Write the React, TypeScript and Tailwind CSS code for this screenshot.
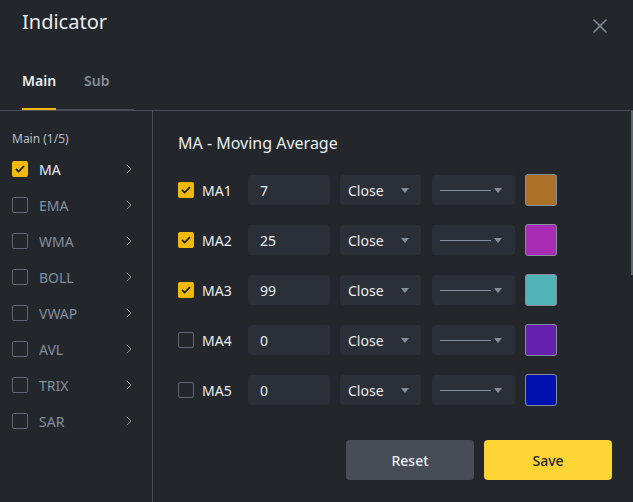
import { ChevronRight, X } from "lucide-react";

const sideItems = [
  { name: "MA", checked: true },
  { name: "EMA", checked: false },
  { name: "WMA", checked: false },
  { name: "BOLL", checked: false },
  { name: "VWAP", checked: false },
  { name: "AVL", checked: false },
  { name: "TRIX", checked: false },
  { name: "SAR", checked: false },
];

const maRows = [
  { name: "MA1", value: "7", checked: true, color: "bg-[#ad7029]" },
  { name: "MA2", value: "25", checked: true, color: "bg-[#a72bb3]" },
  { name: "MA3", value: "99", checked: true, color: "bg-[#52b3b6]" },
  { name: "MA4", value: "0", checked: false, color: "bg-[#6421ad]" },
  { name: "MA5", value: "0", checked: false, color: "bg-[#0012ad]" },
];

const Checkbox = ({ checked }: { checked: boolean }) =>
  checked ? (
    <div className="w-4 h-4 rounded-[2px] bg-[#f0b90b] flex items-center justify-center shrink-0">
      <svg width="10" height="8" viewBox="0 0 10 8" fill="none">
        <path d="M1 4l2.6 2.6L9 1.2" stroke="#1e2329" strokeWidth="1.8" />
      </svg>
    </div>
  ) : (
    <div className="w-4 h-4 rounded-[2px] border border-[#5e6673] shrink-0" />
  );

const Caret = () => (
  <svg width="8" height="5" viewBox="0 0 8 5">
    <path d="M0 0h8L4 5z" fill="#848e9c" />
  </svg>
);

export default function App() {
  return (
    <div
      className="relative w-[633px] h-[502px] bg-[#23272c] text-[#eaecef] overflow-hidden flex flex-col"
      style={{ fontFamily: '"Noto Sans", "Liberation Sans", sans-serif' }}
    >
      <div className="h-[44px] px-[22px] flex items-center justify-between">
        <h1 className="text-[20px] leading-[28px]">Indicator</h1>
        <X className="w-[24px] h-[24px] text-[#848e9c] -mr-px mt-[8px]" strokeWidth={1.6} />
      </div>

      <div className="px-[22px] pt-[27px] border-b border-[#474d57]">
        <div className="w-[112px] flex gap-[28px] border-b border-[#474d57]">
          <div className="text-[14px] leading-[20px] font-semibold pb-[17px] border-b-2 border-[#f0b90b] -mb-px">
            Main
          </div>
          <div className="text-[14px] leading-[20px] font-semibold text-[#848e9c] pb-[17px]">Sub</div>
        </div>
      </div>

      <div className="flex flex-1">
        <div className="w-[153px] border-r border-[#474d57] pt-[20px] px-[12px]">
          <div className="text-[12px] leading-[16px] text-[#b7bdc6] mb-[4px]">Main (1/5)</div>
          {sideItems.map((item) => (
            <div key={item.name} className="h-[36px] flex items-center">
              <Checkbox checked={item.checked} />
              <span
                className={`ml-[11px] flex-1 text-[14px] ${item.checked ? "text-[#eaecef]" : "text-[#848e9c]"}`}
              >
                {item.name}
              </span>
              <ChevronRight className="w-4 h-4 text-[#848e9c] mr-[3px]" strokeWidth={1.5} />
            </div>
          ))}
        </div>

        <div className="flex-1 pl-[25px] pt-[20px] pr-[21px] flex flex-col">
          <h2 className="text-[16px] leading-[24px]">MA - Moving Average</h2>
          <div className="mt-[20px] flex flex-col gap-[20px]">
            {maRows.map((row) => (
              <div key={row.name} className="flex items-center h-[30px]">
                <Checkbox checked={row.checked} />
                <span className="ml-[8px] w-[46px] text-[14px]">{row.name}</span>
                <div className="w-[82px] h-[30px] rounded-[4px] bg-[#2b3038] flex items-center pl-[12px] text-[14px]">
                  {row.value}
                </div>
                <div className="ml-[10px] w-[81px] h-[30px] rounded-[4px] bg-[#2b3038] flex items-center justify-between pl-[8px] pr-[12px] text-[14px]">
                  Close
                  <Caret />
                </div>
                <div className="ml-[11px] w-[83px] h-[30px] rounded-[4px] bg-[#2b3038] flex items-center justify-between pl-[8px] pr-[13px]">
                  <div className="w-[51px] h-px bg-[#848e9c]" />
                  <Caret />
                </div>
                <div className={`ml-[10px] w-[32px] h-[32px] rounded-[3px] border border-[#848e9c] ${row.color}`} />
              </div>
            ))}
          </div>
          <div className="mt-[35px] flex justify-end gap-[10px]">
            <button className="w-[128px] h-[40px] rounded-[4px] bg-[#474d57] text-[14px] font-medium text-[#eaecef]">
              Reset
            </button>
            <button className="w-[128px] h-[40px] rounded-[4px] bg-[#fcd535] text-[14px] font-medium text-[#202630]">
              Save
            </button>
          </div>
        </div>
      </div>

      <div className="absolute right-0 top-[111px] w-[2px] h-[164px] bg-[#5e6673]" />
    </div>
  );
}
